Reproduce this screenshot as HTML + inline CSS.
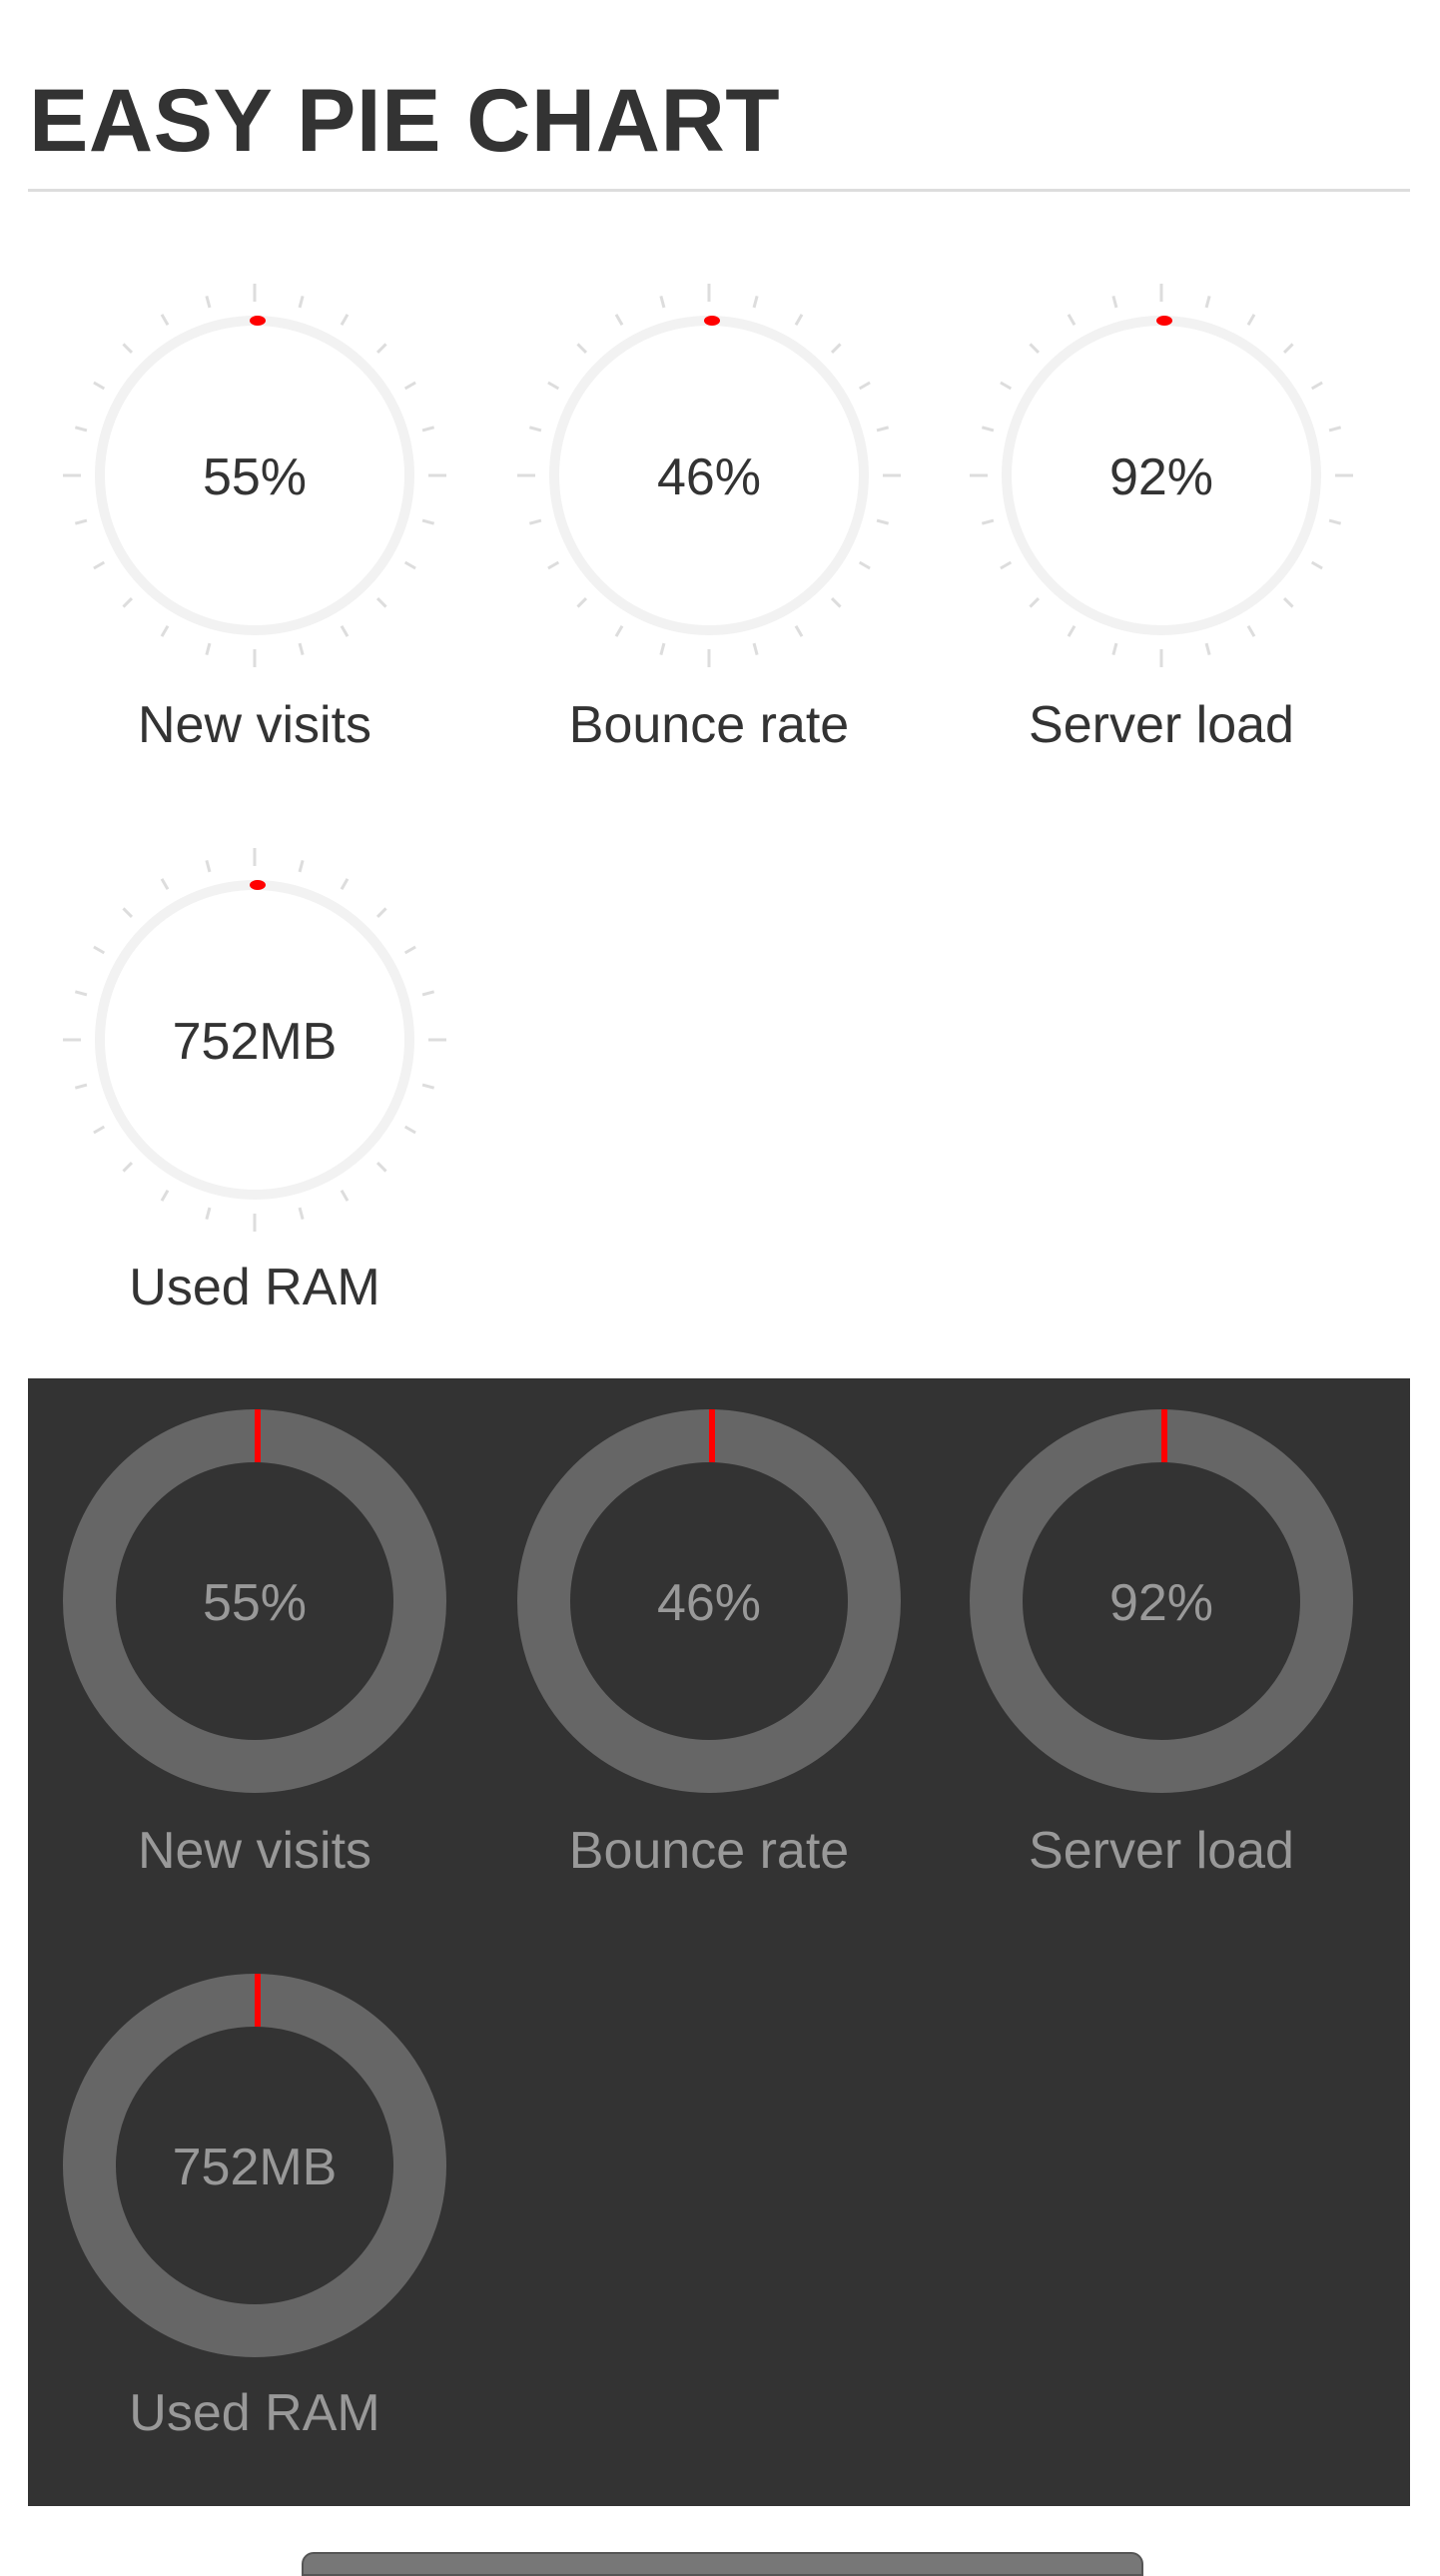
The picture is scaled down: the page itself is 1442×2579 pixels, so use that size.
<!DOCTYPE html>
<html><head><meta charset="utf-8"><style>
html,body{margin:0;padding:0;background:#fff;width:1442px;height:2562px;overflow:hidden;font-family:"Liberation Sans",sans-serif}
h1{position:absolute;left:29px;top:76px;margin:0;font-size:89px;font-weight:bold;color:#333;line-height:1;letter-spacing:0.5px;white-space:nowrap}
.hr{position:absolute;left:28px;width:1384px;top:189px;height:3px;background:#ddd}
.dark{position:absolute;left:28px;top:1380px;width:1384px;height:1129px;background:#333}
.t{position:absolute;width:400px;margin-left:-200px;text-align:center;font-size:52px;line-height:1}
.btn{position:absolute;left:302px;top:2555px;width:839px;height:20px;background:#777;border:2px solid #555;border-radius:12px 12px 0 0}
</style></head><body>
<h1>EASY PIE CHART</h1>
<div class="hr"></div>
<div class="dark"></div>
<svg width="1442" height="2562" style="position:absolute;left:0;top:0">
<defs>
<g id="ticks" stroke="#ddd" stroke-width="3">
<line x1="0" y1="-174" x2="0" y2="-192" transform="rotate(0)"/><line x1="0" y1="-174" x2="0" y2="-186" transform="rotate(15)"/><line x1="0" y1="-174" x2="0" y2="-186" transform="rotate(30)"/><line x1="0" y1="-174" x2="0" y2="-186" transform="rotate(45)"/><line x1="0" y1="-174" x2="0" y2="-186" transform="rotate(60)"/><line x1="0" y1="-174" x2="0" y2="-186" transform="rotate(75)"/><line x1="0" y1="-174" x2="0" y2="-192" transform="rotate(90)"/><line x1="0" y1="-174" x2="0" y2="-186" transform="rotate(105)"/><line x1="0" y1="-174" x2="0" y2="-186" transform="rotate(120)"/><line x1="0" y1="-174" x2="0" y2="-186" transform="rotate(135)"/><line x1="0" y1="-174" x2="0" y2="-186" transform="rotate(150)"/><line x1="0" y1="-174" x2="0" y2="-186" transform="rotate(165)"/><line x1="0" y1="-174" x2="0" y2="-192" transform="rotate(180)"/><line x1="0" y1="-174" x2="0" y2="-186" transform="rotate(195)"/><line x1="0" y1="-174" x2="0" y2="-186" transform="rotate(210)"/><line x1="0" y1="-174" x2="0" y2="-186" transform="rotate(225)"/><line x1="0" y1="-174" x2="0" y2="-186" transform="rotate(240)"/><line x1="0" y1="-174" x2="0" y2="-186" transform="rotate(255)"/><line x1="0" y1="-174" x2="0" y2="-192" transform="rotate(270)"/><line x1="0" y1="-174" x2="0" y2="-186" transform="rotate(285)"/><line x1="0" y1="-174" x2="0" y2="-186" transform="rotate(300)"/><line x1="0" y1="-174" x2="0" y2="-186" transform="rotate(315)"/><line x1="0" y1="-174" x2="0" y2="-186" transform="rotate(330)"/><line x1="0" y1="-174" x2="0" y2="-186" transform="rotate(345)"/>
</g>
<g id="light"><use href="#ticks"/><circle r="155" fill="none" stroke="#f2f2f2" stroke-width="10"/><ellipse cx="3" cy="-155" rx="8" ry="5" fill="#f00"/></g>
<g id="dk"><circle r="165.5" fill="none" stroke="#666" stroke-width="53"/><rect x="0" y="-192" width="6" height="53" fill="#f00"/></g>
</defs>
<use href="#light" x="255" y="476"/><use href="#light" x="710" y="476"/><use href="#light" x="1163" y="476"/><use href="#light" x="255" y="1041"/>
<use href="#dk" x="255" y="1603"/><use href="#dk" x="710" y="1603"/><use href="#dk" x="1163" y="1603"/><use href="#dk" x="255" y="2168"/>
</svg>
<div class="t" style="left:255px;top:452px;color:#333">55%</div>
<div class="t" style="left:710px;top:452px;color:#333">46%</div>
<div class="t" style="left:1163px;top:452px;color:#333">92%</div>
<div class="t" style="left:255px;top:1017px;color:#333">752MB</div>
<div class="t" style="left:255px;top:700px;color:#333">New visits</div>
<div class="t" style="left:710px;top:700px;color:#333">Bounce rate</div>
<div class="t" style="left:1163px;top:700px;color:#333">Server load</div>
<div class="t" style="left:255px;top:1263px;color:#333">Used RAM</div>
<div class="t" style="left:255px;top:1579px;color:#999">55%</div>
<div class="t" style="left:710px;top:1579px;color:#999">46%</div>
<div class="t" style="left:1163px;top:1579px;color:#999">92%</div>
<div class="t" style="left:255px;top:2144px;color:#999">752MB</div>
<div class="t" style="left:255px;top:1827px;color:#999">New visits</div>
<div class="t" style="left:710px;top:1827px;color:#999">Bounce rate</div>
<div class="t" style="left:1163px;top:1827px;color:#999">Server load</div>
<div class="t" style="left:255px;top:2390px;color:#999">Used RAM</div>
<div class="btn"></div>
</body></html>
